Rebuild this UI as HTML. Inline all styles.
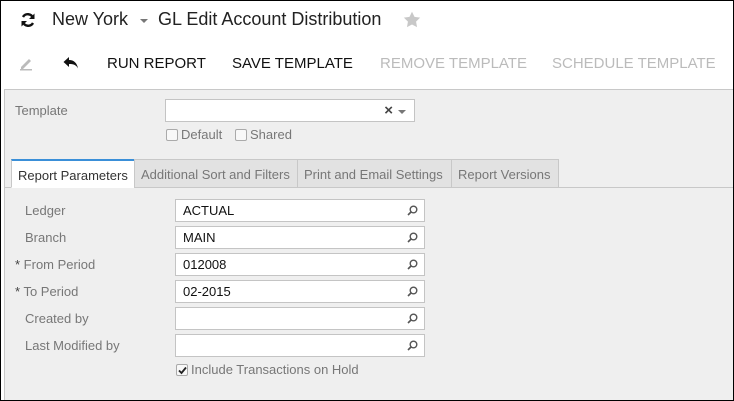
<!DOCTYPE html>
<html><head><style>
*{box-sizing:border-box;margin:0;padding:0}
body{width:734px;height:401px;overflow:hidden;font-family:"Liberation Sans",Arial,sans-serif;background:#fff;position:relative}
.frame{position:absolute;left:0;top:0;width:734px;height:401px;border:1px solid #000;pointer-events:none;z-index:10}
.a{position:absolute;white-space:nowrap}
.tb{font-size:15px;color:#111;top:55px}
.dis{color:#bbb}
.panel{position:absolute;left:4px;top:89px;width:730px;height:312px;background:#efefef;border-top:1px solid #c8c8c8;border-left:1px solid #c8c8c8}
.lbl{font-size:13px;color:#777}
.inp{position:absolute;background:#fff;border:1px solid #c4c4c4;height:23px;width:250px;left:175px;font-size:13px;color:#111;padding:3px 0 0 7px}
.inp svg{position:absolute;right:6px;top:5px}
.tab{position:absolute;top:159px;height:29px;border:1px solid #c8c8c8;background:#e2e2e2;font-size:13px;color:#777;padding:7px 6px 0;white-space:nowrap}
.cb{position:absolute;width:12px;height:12px;border:1px solid #aaa;border-radius:2px;background:#f8f8f8}
</style></head><body>
<div class="frame"></div>
<svg class="a" style="left:20px;top:12px" width="16" height="16" viewBox="0 0 16 16"><path d="M13 6A5.5 5.5 0 0 0 3 5M3 10a5.5 5.5 0 0 0 10 1" fill="none" stroke="#111" stroke-width="2.4"/><path d="M14.5 1.5v5.5h-5.5z M1.5 14.5V9h5.5z" fill="#111"/></svg>
<div class="a" style="left:52px;top:9px;font-size:18px;color:#222">New York</div>
<div class="a" style="left:140px;top:19px;width:0;height:0;border-left:4px solid transparent;border-right:4px solid transparent;border-top:4px solid #777"></div>
<div class="a" style="left:158px;top:9px;font-size:18px;color:#222">GL Edit Account Distribution</div>
<svg class="a" style="left:403px;top:11px" width="18" height="17" viewBox="0 0 24 23"><path d="M12 1l3.4 7 7.6 1-5.5 5.3 1.3 7.6L12 18.3 5.2 21.9l1.3-7.6L1 9l7.6-1z" fill="#c8c8c8"/></svg>
<svg class="a" style="left:19px;top:56px" width="15" height="15" viewBox="0 0 15 15"><path d="M2 11l8-8 2 2-8 8H2z" fill="#bbb"/><rect x="1" y="13" width="12" height="1.5" fill="#bbb"/></svg>
<svg class="a" style="left:63px;top:57px" width="16" height="12" viewBox="0 0 16 12"><path d="M6 0L0.5 5 6 10V7c4 0 7 .5 9 4.5C14 6 11 3 6 3z" fill="#111"/></svg>
<div class="a tb" style="left:107px">RUN REPORT</div>
<div class="a tb" style="left:232px">SAVE TEMPLATE</div>
<div class="a tb dis" style="left:380px">REMOVE TEMPLATE</div>
<div class="a tb dis" style="left:552px">SCHEDULE TEMPLATE</div>
<div class="panel"></div>
<div class="a lbl" style="left:15px;top:103px">Template</div>
<div class="inp" style="left:165px;top:99px;width:250px"><span style="position:absolute;right:21px;top:2px;color:#444;font-size:15px;font-weight:bold">×</span><span style="position:absolute;right:8px;top:10px;border-left:4px solid transparent;border-right:4px solid transparent;border-top:4px solid #777"></span></div>
<div class="cb" style="left:166px;top:129px"></div><div class="a lbl" style="left:181px;top:127px">Default</div>
<div class="cb" style="left:235px;top:129px"></div><div class="a lbl" style="left:250px;top:127px">Shared</div>
<div class="a" style="left:4px;top:187px;width:730px;border-top:1px solid #c8c8c8"></div>
<div class="tab" style="left:11px;width:124px;background:#fff;border-top:2px solid #3a8fd8;border-bottom-color:#fff;color:#333">Report Parameters</div>
<div class="tab" style="left:134px;width:164px">Additional Sort and Filters</div>
<div class="tab" style="left:297px;width:155px">Print and Email Settings</div>
<div class="tab" style="left:451px;width:108px">Report Versions</div>
<div class="a lbl" style="left:25px;top:203px">Ledger</div>
<div class="a lbl" style="left:25px;top:230px">Branch</div>
<div class="a lbl" style="left:15px;top:257px"><span style="color:#444">*</span> From Period</div>
<div class="a lbl" style="left:15px;top:284px"><span style="color:#444">*</span> To Period</div>
<div class="a lbl" style="left:25px;top:311px">Created by</div>
<div class="a lbl" style="left:25px;top:338px">Last Modified by</div>
<div class="inp" style="top:199px">ACTUAL<svg width="11" height="11" viewBox="0 0 11 11"><circle cx="6.5" cy="4.5" r="3.3" fill="none" stroke="#555" stroke-width="1.4"/><path d="M4 7L1 10" stroke="#555" stroke-width="1.6"/></svg></div>
<div class="inp" style="top:226px">MAIN<svg width="11" height="11" viewBox="0 0 11 11"><circle cx="6.5" cy="4.5" r="3.3" fill="none" stroke="#555" stroke-width="1.4"/><path d="M4 7L1 10" stroke="#555" stroke-width="1.6"/></svg></div>
<div class="inp" style="top:253px">012008<svg width="11" height="11" viewBox="0 0 11 11"><circle cx="6.5" cy="4.5" r="3.3" fill="none" stroke="#555" stroke-width="1.4"/><path d="M4 7L1 10" stroke="#555" stroke-width="1.6"/></svg></div>
<div class="inp" style="top:280px">02-2015<svg width="11" height="11" viewBox="0 0 11 11"><circle cx="6.5" cy="4.5" r="3.3" fill="none" stroke="#555" stroke-width="1.4"/><path d="M4 7L1 10" stroke="#555" stroke-width="1.6"/></svg></div>
<div class="inp" style="top:307px"><svg width="11" height="11" viewBox="0 0 11 11"><circle cx="6.5" cy="4.5" r="3.3" fill="none" stroke="#555" stroke-width="1.4"/><path d="M4 7L1 10" stroke="#555" stroke-width="1.6"/></svg></div>
<div class="inp" style="top:334px"><svg width="11" height="11" viewBox="0 0 11 11"><circle cx="6.5" cy="4.5" r="3.3" fill="none" stroke="#555" stroke-width="1.4"/><path d="M4 7L1 10" stroke="#555" stroke-width="1.6"/></svg></div>
<div class="cb" style="left:176px;top:364px"><svg style="position:absolute;left:1px;top:1px" width="9" height="9" viewBox="0 0 9 9"><path d="M1 4.5l2.5 2.5L8 1.5" fill="none" stroke="#222" stroke-width="1.8"/></svg></div>
<div class="a lbl" style="left:191px;top:362px">Include Transactions on Hold</div>
</body></html>
